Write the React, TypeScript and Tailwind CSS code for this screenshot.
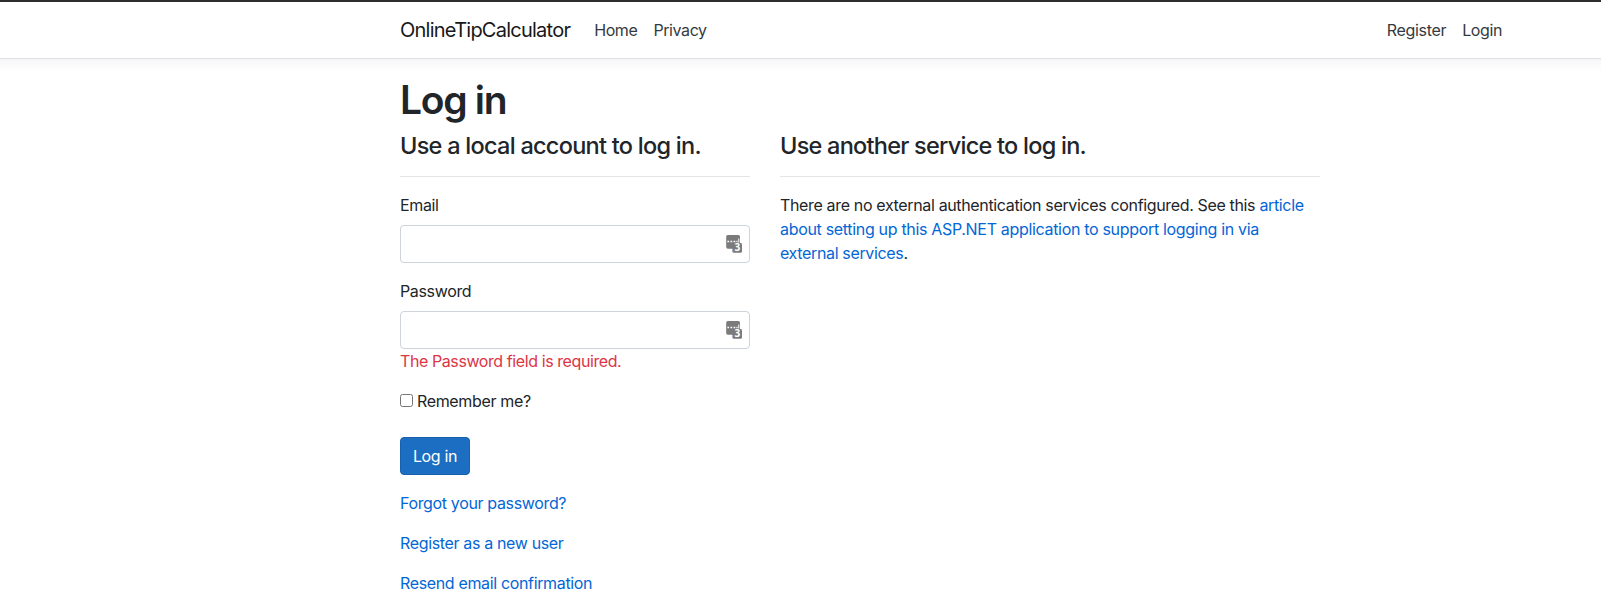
import React from "react";

function KeyIcon() {
  return (
    <svg width="17" height="19" viewBox="0 0 17 19" className="pointer-events-none absolute right-[7px] top-[9px]" aria-hidden="true">
      <path d="M1.8 1h10.6A1.6 1.6 0 0 1 14 2.6V14.7H1.8A1.6 1.6 0 0 1 .2 13.1V2.6A1.6 1.6 0 0 1 1.8 1z" fill="#7b7b7b" />
      <rect x="6.4" y="8.8" width="9.6" height="10" rx="1.6" fill="#7b7b7b" />
      <path d="M14 4h2v4.8h-2z" fill="#fff" />
      <path d="M1.4 6.7h1.7v1.6H1.4zM4.5 6.7h1.7v1.6H4.5zM7.6 6.7h1.7v1.6H7.6zM10.4 6.7h1.2v1.6h-1.2zM12.3 4.6h1v4h-1z" fill="#fff" />
      <text x="11.4" y="17.4" textAnchor="middle" fill="#fff" className="font-['Open_Sans',sans-serif] text-[10px] font-bold tracking-normal">3</text>
    </svg>
  );
}

function Field({ id, label, type, error }: { id: string; label: string; type: string; error?: string }) {
  return (
    <div className="mb-4">
      <label htmlFor={id} className="mb-2 block">{label}</label>
      <div className="relative h-[38px]">
        <input id={id} type={type} className="block h-[38px] w-full rounded border border-[#ced4da] bg-white px-3" />
        <KeyIcon />
      </div>
      {error && <span className="block tracking-[-0.41px] text-[#dc3545]">{error}</span>}
    </div>
  );
}

export default function App() {
  return (
    <div className="min-h-[608px] overflow-hidden bg-white font-['Inter',sans-serif] text-base leading-6 tracking-[-0.35px] text-[#212529]">
      <header className="-mx-4 mb-4 border-b border-t-2 border-b-[#dee2e6] border-t-[#2f2d2e] bg-white shadow-[0_4px_12px_rgba(0,0,0,0.05)]">
        <nav className="ml-[416px] flex h-14 w-[1110px] items-center">
          <a href="#" className="mr-4 text-xl leading-[30px] tracking-[-0.76px] text-[#181818]">OnlineTipCalculator</a>
          <a href="#" className="px-2 tracking-[-0.4px] text-[#343a40]">Home</a>
          <a href="#" className="px-2 tracking-[-0.4px] text-[#343a40]">Privacy</a>
          <a href="#" className="ml-auto px-2 tracking-[-0.3px] text-[#343a40]">Register</a>
          <a href="#" className="px-2 tracking-[-0.4px] text-[#343a40]">Login</a>
        </nav>
      </header>
      <main className="ml-[400px] w-[920px]">
        <h1 className="mb-2 pt-0.5 text-[39px] font-[560] leading-[46px] tracking-[-1.3px]">Log in</h1>
        <div className="flex gap-[30px]">
          <section className="w-[350px]">
            <h4 className="h-7 text-[23.5px] font-[540] leading-[30px] tracking-[-0.73px]">Use a local account to log in.</h4>
            <hr className="mb-4 mt-[17px] border-t border-[#e5e5e5]" />
            <form onSubmit={(e) => e.preventDefault()}>
              <Field id="email" label="Email" type="email" />
              <Field id="password" label="Password" type="password" error="The Password field is required." />
              <label className="mb-6 flex h-6 items-center gap-1">
                <input type="checkbox" className="relative -top-px size-[13px]" />
                Remember me?
              </label>
              <button className="mb-4 block h-[38px] w-[70px] rounded border border-[#1861ac] bg-[#1b6ec2] text-white">Log in</button>
              <div className="flex flex-col items-start gap-4 text-[#0366d6]">
                <a href="#">Forgot your password?</a>
                <a href="#">Register as a new user</a>
                <a href="#">Resend email confirmation</a>
              </div>
            </form>
          </section>
          <section className="w-[540px]">
            <h4 className="h-7 text-[23.5px] font-[540] leading-[30px] tracking-[-0.75px]">Use another service to log in.</h4>
            <hr className="mb-4 mt-[17px] border-t border-[#e5e5e5]" />
            <p className="whitespace-nowrap">
              There are no external authentication services configured. See this{" "}
              <a href="#" className="text-[#0366d6]">
                article<br /><span className="tracking-[-0.32px]">about setting up this ASP.NET application to support logging in via</span><br />external services
              </a>.
            </p>
          </section>
        </div>
      </main>
    </div>
  );
}
